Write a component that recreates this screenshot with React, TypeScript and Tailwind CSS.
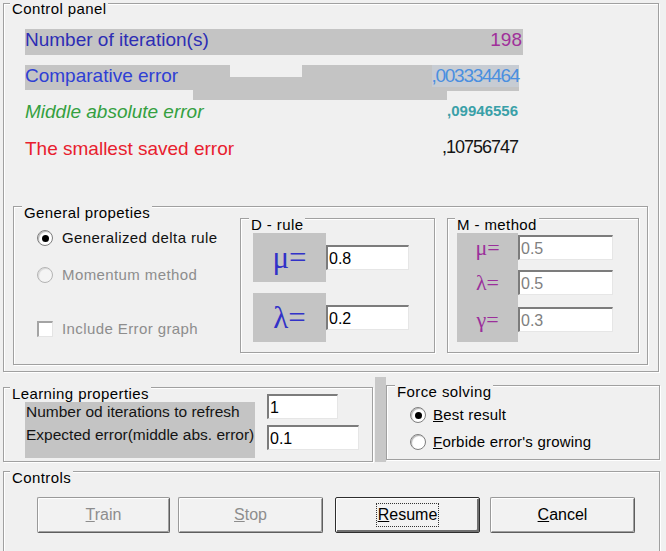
import React from "react";

const gb =
  "relative border border-[#a0a0a0] shadow-[inset_1px_1px_0_#ffffff,1px_1px_0_#ffffff]";
const ttl =
  "absolute bg-[#f0f0f0] px-[2px] text-[15px] leading-[15px] tracking-[0.4px] text-black whitespace-nowrap";
const inputBase =
  "h-[25px] border-t-2 border-l-2 border-t-[#7c7c7c] border-l-[#7c7c7c] border-r border-b border-r-[#e6e6e6] border-b-[#e6e6e6] bg-white pl-[1px] text-[16px] leading-[24px] whitespace-nowrap";
const btnBase =
  "flex h-[36px] items-center justify-center rounded-[2px] border bg-[#f2f2f2] text-[16px]";

function Radio({ checked, disabled }: { checked?: boolean; disabled?: boolean }) {
  return (
    <span
      className={
        disabled
          ? "flex h-[16px] w-[16px] shrink-0 items-center justify-center rounded-full border border-[#b4b4b4] bg-[#f4f4f4] shadow-[inset_1px_1px_1px_rgba(0,0,0,0.12)]"
          : "flex h-[16px] w-[16px] shrink-0 items-center justify-center rounded-full border border-[#7e7e7e] bg-white shadow-[inset_1px_1px_1px_rgba(0,0,0,0.3)]"
      }
    >
      {checked && <span className="h-[7px] w-[7px] rounded-full bg-black" />}
    </span>
  );
}

export default function App() {
  return (
    <div className="relative h-[551px] w-[666px] overflow-hidden bg-[#f0f0f0] font-['Liberation_Sans',Arial,sans-serif] text-black">
      <div className="pl-[3px] pt-[3px]">
        {/* Control panel */}
        <div className={`${gb} h-[369px] w-[656px]`}>
          <span className={`${ttl} -top-[3px] left-[6px]`}>Control panel</span>

          <div className="pl-[21px] pt-[25px]">
            {/* Row 1 */}
            <div className="flex h-[26px] w-[498px] items-start justify-between bg-[#c4c4c4] pr-[1px] text-[19px] leading-[22px]">
              <span className="text-[#2d2db4]">Number of iteration(s)</span>
              <span className="text-[#a0309a]">198</span>
            </div>
            {/* Row 2 */}
            <div className="relative mt-[10px] h-[26px] w-[494px]">
              <div className="absolute left-0 top-0 h-[25px] w-[205px] bg-[#c4c4c4]" />
              <div className="absolute left-[168px] top-[12px] h-[23px] w-[254px] bg-[#c4c4c4]" />
              <div className="absolute left-[277px] top-0 h-[26px] w-[217px] bg-[#c4c4c4]" />
              <div className="relative flex h-[26px] items-start justify-between text-[19px] leading-[22px]">
                <span className="text-[#2f3fd4]">Comparative error</span>
                <span className="bg-[#c7ccd3] tracking-[-1.3px] text-[#4a8fe0]">,003334464</span>
              </div>
            </div>
            {/* Row 3 */}
            <div className="mt-[10px] flex h-[22px] w-[493px] items-start justify-between">
              <span className="text-[19px] italic leading-[22px] text-[#34a040]">Middle absolute error</span>
              <span className="text-[15px] font-bold leading-[19px] text-[#3aa0a8]">,09946556</span>
            </div>
            {/* Row 4 */}
            <div className="mt-[15px] flex h-[22px] w-[493px] items-start justify-between">
              <span className="text-[19px] leading-[22px] text-[#e8202e]">The smallest saved error</span>
              <span className="text-[18px] leading-[18px] tracking-[-1px] text-[#141414]">,10756747</span>
            </div>
          </div>

          {/* General propeties */}
          <div className={`${gb} ml-[9px] mt-[46px] h-[159px] w-[635px]`}>
            <span className={`${ttl} -top-[2px] left-[8px]`}>General propeties</span>
            <div className="flex">
              <div className="w-[226px] pl-[23px] pt-[23px] text-[15px] leading-[16px] tracking-[0.4px]">
                <div className="flex h-[16px] items-center gap-[9px]">
                  <Radio checked />
                  <span className="text-[#111]">Generalized delta rule</span>
                </div>
                <div className="mt-[21px] flex h-[16px] items-center gap-[9px]">
                  <Radio disabled />
                  <span className="text-[#8d8d8d]">Momentum method</span>
                </div>
                <div className="mt-[38px] flex h-[16px] items-center gap-[9px]">
                  <span className="h-[16px] w-[16px] border-t-2 border-l-2 border-t-[#a4a4a4] border-l-[#a4a4a4] border-r border-b border-r-[#e4e4e4] border-b-[#e4e4e4] bg-white" />
                  <span className="text-[#8d8d8d]">Include Error graph</span>
                </div>
              </div>

              {/* D - rule */}
              <div className={`${gb} mt-[11px] h-[135px] w-[195px]`}>
                <span className={`${ttl} -top-[2px] left-[8px]`}>D - rule</span>
                <div className="ml-[12px] mt-[14px] flex items-center">
                  <div className="flex h-[49px] w-[73px] items-center justify-center bg-[#c4c4c4] font-['Liberation_Serif',serif] text-[31px] leading-[30px] text-[#3232c8]">
                    μ=
                  </div>
                  <div className={`${inputBase} w-[83px]`}>0.8</div>
                </div>
                <div className="ml-[12px] mt-[11px] flex items-center">
                  <div className="flex h-[49px] w-[73px] items-center justify-center bg-[#c4c4c4] font-['Liberation_Serif',serif] text-[31px] leading-[30px] text-[#3232c8]">
                    λ=
                  </div>
                  <div className={`${inputBase} w-[83px]`}>0.2</div>
                </div>
              </div>

              {/* M - method */}
              <div className={`${gb} ml-[12px] mt-[11px] h-[135px] w-[192px]`}>
                <span className={`${ttl} -top-[2px] left-[7px]`}>M - method</span>
                <div className="ml-[9px] mt-[14px] flex">
                  <div className="flex h-[109px] w-[61px] flex-col bg-[#c4c4c4] pt-[2px] font-['Liberation_Serif',serif] text-[22px] leading-[22px] text-[#9b2f9b]">
                    <div className="flex h-[25px] items-center justify-center">μ=</div>
                    <div className="mt-[10px] flex h-[25px] items-center justify-center">λ=</div>
                    <div className="mt-[12px] flex h-[25px] items-center justify-center">γ=</div>
                  </div>
                  <div className="flex flex-col pt-[2px] text-[#808080]">
                    <div className={`${inputBase} w-[95px]`}>0.5</div>
                    <div className={`${inputBase} mt-[10px] w-[95px]`}>0.5</div>
                    <div className={`${inputBase} mt-[12px] w-[95px]`}>0.3</div>
                  </div>
                </div>
              </div>
            </div>
          </div>
        </div>

        {/* Learning + Force row */}
        <div className="mt-[5px] flex items-start">
          <div className={`${gb} mt-[10px] h-[75px] w-[370px]`}>
            <span className={`${ttl} -top-[2px] left-[6px]`}>Learning properties</span>
            <div className="flex">
              <div className="ml-[21px] mt-[14px] h-[56px] w-[230px] bg-[#c4c4c4] pl-[1px] text-[15.5px] text-[#141414] whitespace-nowrap">
                <div className="h-[20px] leading-[20px]">Number od iterations to refresh</div>
                <div className="h-[26px] leading-[26px]">Expected error(middle abs. error)</div>
              </div>
              <div className="ml-[12px] mt-[6px] flex flex-col gap-[6px]">
                <div className={`${inputBase} w-[71px]`}>1</div>
                <div className={`${inputBase} w-[92px]`}>0.1</div>
              </div>
            </div>
          </div>
          <div className="ml-[2px] h-[85px] w-[11px] bg-[#c8c8c8]" />
          <div className={`${gb} mt-[8px] h-[75px] w-[274px]`}>
            <span className={`${ttl} -top-[2px] left-[8px]`}>Force solving</span>
            <div className="pl-[23px] pt-[21px] text-[15px] leading-[16px] tracking-[0.2px]">
              <div className="flex h-[16px] items-center gap-[7px]">
                <Radio checked />
                <span>
                  <span className="underline">B</span>est result
                </span>
              </div>
              <div className="mt-[11px] flex h-[16px] items-center gap-[7px]">
                <Radio />
                <span>
                  <span className="underline">F</span>orbide error's growing
                </span>
              </div>
            </div>
          </div>
        </div>

        {/* Controls */}
        <div className={`${gb} mt-[9px] h-[100px] w-[657px]`}>
          <span className={`${ttl} -top-[2px] left-[6px]`}>Controls</span>
          <div className="flex pl-[33px] pt-[25px]">
            <div className={`${btnBase} w-[133px] border-[#9a9a9a] border-b-[#5e5e5e] border-r-[#5e5e5e] text-[#8d8d8d] shadow-[inset_1px_1px_0_#ffffff,inset_-1px_-1px_0_#a0a0a0]`}>
              <span>
                <span className="underline">T</span>rain
              </span>
            </div>
            <div className={`${btnBase} ml-[8px] w-[145px] border-[#9a9a9a] border-b-[#5e5e5e] border-r-[#5e5e5e] text-[#8d8d8d] shadow-[inset_1px_1px_0_#ffffff,inset_-1px_-1px_0_#a0a0a0]`}>
              <span>
                <span className="underline">S</span>top
              </span>
            </div>
            <div className={`${btnBase} ml-[12px] w-[145px] border-[#2e2e2e] text-black shadow-[inset_1px_1px_0_#ffffff,inset_-2px_-2px_0_#707070]`}>
              <span className="border border-dotted border-[#333] px-[1px] leading-[22px]">
                <span className="underline">R</span>esume
              </span>
            </div>
            <div className={`${btnBase} ml-[10px] w-[145px] border-[#9a9a9a] border-b-[#5e5e5e] border-r-[#5e5e5e] text-black shadow-[inset_1px_1px_0_#ffffff,inset_-1px_-1px_0_#a0a0a0]`}>
              <span>
                <span className="underline">C</span>ancel
              </span>
            </div>
          </div>
        </div>
      </div>
    </div>
  );
}
